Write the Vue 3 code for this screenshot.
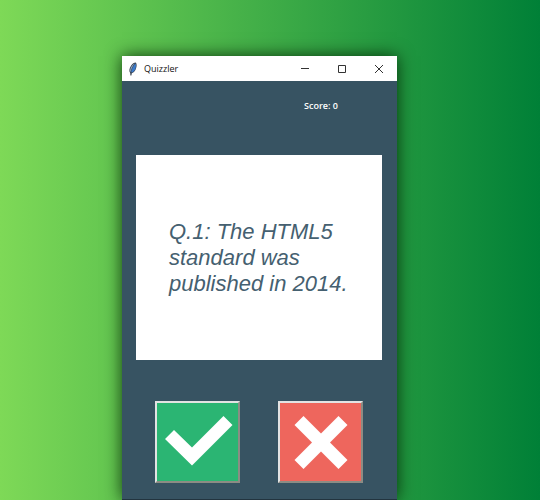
<script setup>
import { ref } from 'vue'

const score = ref(0)
const question = ref('Q.1: The HTML5 standard was published in 2014.')
</script>

<template>
  <main class="desktop">
    <section class="window" aria-label="Quizzler">
      <header class="titlebar">
        <svg class="feather" viewBox="0 0 10 14" aria-hidden="true">
          <path d="M7.6 0.6 C9.2 1.8 8.8 5.4 7.4 8 C6.4 9.8 5 11 3.8 11.2 L3.4 13.6 L2.4 13.4 L2.2 11 C0.8 9.4 1.2 6.2 3 3.8 C4.4 1.8 6.2 0.6 7.6 0.6 Z" fill="#3a4452" />
          <path d="M7.4 1.4 C8.5 2.8 8 5.8 6.8 7.9 C5.8 9.6 4.6 10.4 3.2 10.3 C3.6 7 5 4 7.4 1.4 Z" fill="#3b7acb" />
          <path d="M6.8 1.6 C5 2.4 3 4.6 2.4 7 C2 8.4 2.2 9.4 2.8 9.9 C3.2 6.8 4.6 4 6.8 1.6 Z" fill="#8fa9c6" />
        </svg>
        <h1 class="title">Quizzler</h1>
        <div class="controls">
          <button class="control" type="button" aria-label="Minimize">
            <svg viewBox="0 0 10 10"><path d="M1 4.5 H9" /></svg>
          </button>
          <button class="control" type="button" aria-label="Maximize">
            <svg viewBox="0 0 10 10"><path d="M1.5 1.5 H8.5 V8.5 H1.5 Z" /></svg>
          </button>
          <button class="control" type="button" aria-label="Close">
            <svg viewBox="0 0 10 10"><path d="M1 1 L9 9 M9 1 L1 9" /></svg>
          </button>
        </div>
      </header>
      <div class="board">
        <p class="score">Score: {{ score }}</p>
        <div class="card">
          <p class="question">{{ question }}</p>
        </div>
        <div class="answers">
          <button class="answer yes" type="button" aria-label="True">
            <svg viewBox="0 0 81 78"><path d="M17 27 L35 44.5 L66.5 13 L75.5 22 L35 62.5 L8 36 Z" fill="#fff" /></svg>
          </button>
          <button class="answer no" type="button" aria-label="False">
            <svg viewBox="0 0 81 78"><path d="M23.5 13 L41 30.5 L58.5 13 L67.5 22 L50 39.5 L67.5 57 L58.5 66 L41 48.5 L23.5 66 L14.5 57 L32 39.5 L14.5 22 Z" fill="#fff" /></svg>
          </button>
        </div>
      </div>
    </section>
  </main>
</template>

<style>
body {
  margin: 0;
}
</style>

<style scoped>
.desktop {
  box-sizing: border-box;
  min-height: 100vh;
  padding: 56px 143px 0 122px;
  overflow: hidden;
  background: linear-gradient(90deg, #7ed957, #008037);
  font-family: "Open Sans", "Noto Sans", sans-serif;
}

.window {
  background: #375362;
  box-shadow: 0 0 16px rgba(0, 30, 0, 0.85);
}

.titlebar {
  display: flex;
  align-items: center;
  height: 25px;
  padding-left: 6px;
  background: #fff;
}

.feather {
  width: 10px;
  height: 14px;
}

.title {
  flex: 1;
  margin: 0 0 0 6px;
  font-size: 9px;
  font-weight: 400;
  line-height: 12px;
  color: #111;
}

.controls {
  display: flex;
}

.control {
  display: grid;
  place-items: center;
  width: 37px;
  height: 24px;
  padding: 0;
  border: 0;
  background: none;
}

.control svg {
  width: 10px;
  height: 10px;
  fill: none;
  stroke: #333;
}

.board {
  padding: 19px 15px 16px 14px;
  border-bottom: 1px solid #22343f;
}

.score {
  margin: 0 44px 43px 0;
  font-size: 9px;
  font-weight: 600;
  line-height: 12px;
  text-align: right;
  color: #fff;
}

.card {
  display: grid;
  align-items: center;
  min-height: 205px;
  padding: 0 30px 0 33px;
  box-sizing: border-box;
  background: #fff;
}

.question {
  margin: 0;
  font-family: "Liberation Sans", Arial, sans-serif;
  font-size: 22px;
  font-style: italic;
  line-height: 26px;
  color: #456070;
}

.answers {
  display: flex;
  justify-content: center;
  gap: 38px;
  margin-top: 41px;
}

.answer {
  box-sizing: border-box;
  width: 85px;
  height: 82px;
  padding: 0;
  border: 2px solid;
  border-color: #e3e3e3 #8c8c84 #8c8c84 #e3e3e3;
}

.answer svg {
  display: block;
  width: 100%;
  height: 100%;
}

.yes {
  background: #2bb573;
}

.no {
  background: #ee665d;
}
</style>
